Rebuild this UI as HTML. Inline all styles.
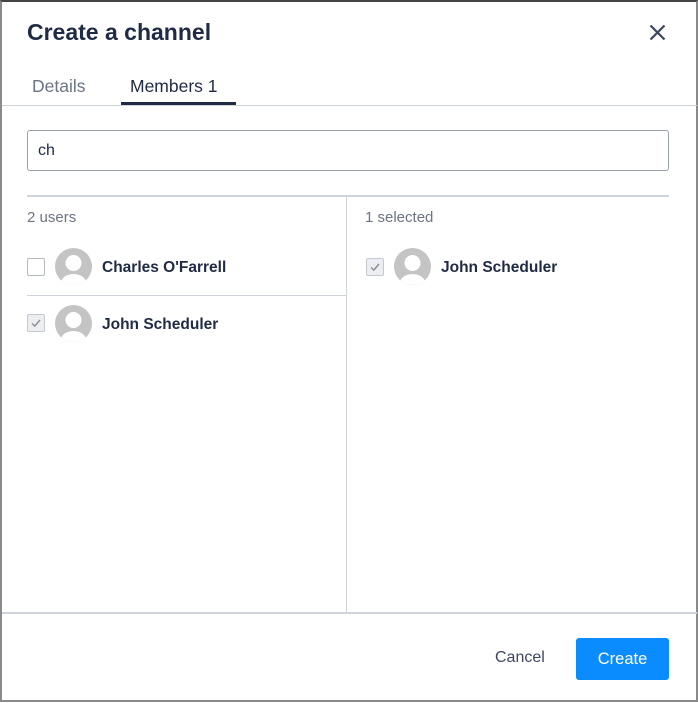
<!DOCTYPE html>
<html><head><style>
*{box-sizing:border-box;margin:0;padding:0}
body{width:698px;height:703px;background:#fff;font-family:"Liberation Sans",sans-serif;color:#1f2a44;position:relative;overflow:hidden}
.frame{position:absolute;left:0;top:0;width:698px;height:702px;border:2px solid #8a8a8a;border-top-color:#444;border-right-width:2px}
.a{position:absolute}
.hl{position:absolute;height:1px;background:#cfd3da}
.cb{position:absolute;width:18px;height:18px;border:1.5px solid #b5b9c2;border-radius:2px;background:#fff}
.cb.on{background:#eceef2;border-color:#c6c9d0}
.cb.on svg{position:absolute;left:2px;top:2px}
.av{position:absolute;width:37px;height:37px;border-radius:50%;background:#c4c4c4;overflow:hidden}
.name{position:absolute;font-size:15.5px;font-weight:bold;color:#1f2a44}
</style></head><body>
<div class="frame"></div>
<div class="a" style="left:27px;top:19px;font-size:23px;font-weight:bold;color:#1f2a44">Create a channel</div>
<svg class="a" style="left:649px;top:24px" width="17" height="17" viewBox="0 0 17 17"><path d="M1.5 1.5L15.5 15.5M15.5 1.5L1.5 15.5" stroke="#3c4660" stroke-width="2.2"/></svg>
<div class="a" style="left:32px;top:76px;font-size:17.5px;color:#6b7385">Details</div>
<div class="a" style="left:130px;top:76px;font-size:17.5px;color:#1f2a44">Members 1</div>
<div class="a" style="left:121px;top:102px;width:115px;height:3px;background:#1f2a44"></div>
<div class="hl" style="left:2px;top:105px;width:695px"></div>
<div class="a" style="left:27px;top:130px;width:642px;height:41px;border:1.5px solid #9aa0ab;border-radius:3px"></div>
<div class="a" style="left:38px;top:142px;font-size:16px">ch</div>
<div class="hl" style="left:27px;top:195px;width:642px;height:2px"></div>
<div class="a" style="left:346px;top:196px;width:1px;height:417px;background:#cfd3da"></div>
<div class="a" style="left:27px;top:209px;font-size:15px;color:#6b7385">2 users</div>
<div class="a" style="left:365px;top:209px;font-size:15px;color:#6b7385">1 selected</div>

<div class="cb" style="left:27px;top:258px"></div>
<div class="av" style="left:55px;top:248px"><svg width="37" height="37" viewBox="0 0 37 37"><circle cx="18.5" cy="15" r="8" fill="#fff"/><ellipse cx="18.5" cy="36" rx="13" ry="10" fill="#fff"/></svg></div>
<div class="name" style="left:102px;top:259px">Charles O'Farrell</div>
<div class="hl" style="left:27px;top:295px;width:319px"></div>

<div class="cb on" style="left:27px;top:314px"><svg width="12" height="12" viewBox="0 0 12 12"><path d="M2 6.5L4.8 9L10 3" stroke="#8a909c" stroke-width="1.5" fill="none"/></svg></div>
<div class="av" style="left:55px;top:305px"><svg width="37" height="37" viewBox="0 0 37 37"><circle cx="18.5" cy="15" r="8" fill="#fff"/><ellipse cx="18.5" cy="36" rx="13" ry="10" fill="#fff"/></svg></div>
<div class="name" style="left:102px;top:316px">John Scheduler</div>

<div class="cb on" style="left:366px;top:258px"><svg width="12" height="12" viewBox="0 0 12 12"><path d="M2 6.5L4.8 9L10 3" stroke="#8a909c" stroke-width="1.5" fill="none"/></svg></div>
<div class="av" style="left:394px;top:248px"><svg width="37" height="37" viewBox="0 0 37 37"><circle cx="18.5" cy="15" r="8" fill="#fff"/><ellipse cx="18.5" cy="36" rx="13" ry="10" fill="#fff"/></svg></div>
<div class="name" style="left:441px;top:259px">John Scheduler</div>

<div class="hl" style="left:2px;top:612px;width:695px;height:2px"></div>
<div class="a" style="left:495px;top:649px;font-size:16px;color:#3c4660">Cancel</div>
<div class="a" style="left:576px;top:638px;width:93px;height:42px;background:#0a8cff;border-radius:3px;color:#fff;font-size:16.5px;text-align:center;line-height:42px">Create</div>
</body></html>
